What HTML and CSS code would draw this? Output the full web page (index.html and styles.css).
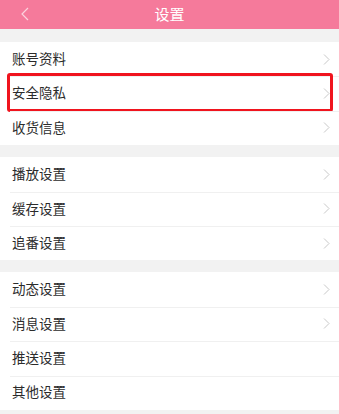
FILE: index.html
```html
<!DOCTYPE html>
<html lang="zh-CN">
<head>
<meta charset="utf-8">
<title>设置</title>
<link rel="stylesheet" href="styles.css">
</head>
<body>
<div class="page">
  <header class="topbar">
    <span class="back"><svg width="8" height="14" viewBox="0 0 8 14"><polyline points="7,1 1,7 7,13" fill="none" stroke="#fbd3de" stroke-width="1.2"/></svg></span>
    <h1 class="title">设置</h1>
  </header>
  <div class="gap first"></div>
  <ul class="group">
    <li class="row"><span class="label">账号资料</span><svg class="chev" width="7" height="11" viewBox="0 0 7 11"><polyline points="1,0.5 6,5.5 1,10.5" fill="none" stroke="#c8c8c8" stroke-width="1"/></svg></li>
    <li class="row marked"><span class="label">安全隐私</span><svg class="chev" width="7" height="11" viewBox="0 0 7 11"><polyline points="1,0.5 6,5.5 1,10.5" fill="none" stroke="#c8c8c8" stroke-width="1"/></svg></li>
    <li class="row"><span class="label">收货信息</span><svg class="chev" width="7" height="11" viewBox="0 0 7 11"><polyline points="1,0.5 6,5.5 1,10.5" fill="none" stroke="#c8c8c8" stroke-width="1"/></svg></li>
  </ul>
  <div class="gap"></div>
  <ul class="group">
    <li class="row"><span class="label">播放设置</span><svg class="chev" width="7" height="11" viewBox="0 0 7 11"><polyline points="1,0.5 6,5.5 1,10.5" fill="none" stroke="#c8c8c8" stroke-width="1"/></svg></li>
    <li class="row"><span class="label">缓存设置</span><svg class="chev" width="7" height="11" viewBox="0 0 7 11"><polyline points="1,0.5 6,5.5 1,10.5" fill="none" stroke="#c8c8c8" stroke-width="1"/></svg></li>
    <li class="row"><span class="label">追番设置</span><svg class="chev" width="7" height="11" viewBox="0 0 7 11"><polyline points="1,0.5 6,5.5 1,10.5" fill="none" stroke="#c8c8c8" stroke-width="1"/></svg></li>
  </ul>
  <div class="gap"></div>
  <ul class="group">
    <li class="row"><span class="label">动态设置</span><svg class="chev" width="7" height="11" viewBox="0 0 7 11"><polyline points="1,0.5 6,5.5 1,10.5" fill="none" stroke="#c8c8c8" stroke-width="1"/></svg></li>
    <li class="row"><span class="label">消息设置</span><svg class="chev" width="7" height="11" viewBox="0 0 7 11"><polyline points="1,0.5 6,5.5 1,10.5" fill="none" stroke="#c8c8c8" stroke-width="1"/></svg></li>
    <li class="row"><span class="label">推送设置</span></li>
    <li class="row"><span class="label">其他设置</span></li>
  </ul>
  <div class="gap"></div>
</div>
</body>
</html>
```

FILE: styles.css
```css
* { box-sizing: border-box; }
html, body { margin: 0; padding: 0; }
body {
  background: #f2f2f2;
  font-family: "Noto Sans CJK SC", "Noto Sans", sans-serif;
  color: #2b2b2b;
  width: 339px;
  height: 414px;
  overflow: hidden;
}
.page { display: flex; flex-direction: column; }
.topbar {
  height: 29px;
  background: #f57a9b;
  display: flex;
  align-items: center;
  justify-content: center;
  position: relative;
}
.back {
  position: absolute;
  left: 21px;
  top: 7px;
  display: flex;
}
.title {
  margin: 0;
  font-size: 15px;
  font-weight: normal;
  color: #fff;
  line-height: 1;
  margin-top: -3px;
}
.gap { height: 12px; background: #f2f2f2; flex: none; }
.gap.first { height: 13px; }
.group {
  list-style: none;
  margin: 0;
  padding: 0;
  background: #fff;
}
.row {
  height: 34.4px;
  padding: 0 9px 0 12px;
  display: flex;
  align-items: center;
  justify-content: space-between;
  font-size: 13.5px;
  position: relative;
}
.label { line-height: 1; margin-top: -1px; }
.row + .row::before {
  content: "";
  position: absolute;
  left: 10px;
  right: 0;
  top: 0;
  height: 1px;
  background: #f0f0f0;
}
.chev { display: block; margin-right: 0; }
.marked::after {
  content: "";
  position: absolute;
  left: 7px;
  right: 6px;
  top: -3.4px;
  bottom: -1.7px;
  border: 3px solid #f0141e;
  border-radius: 3px;
}
```
